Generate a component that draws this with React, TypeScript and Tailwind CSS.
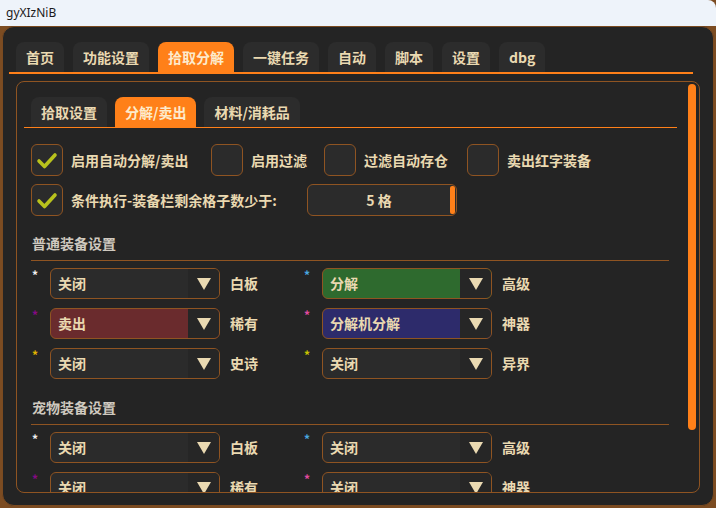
import React from "react";

const font = { fontFamily: '"Noto Sans CJK SC", "Noto Sans", sans-serif' };

const Tab = ({ label, active }: { label: string; active?: boolean }) => (
  <div
    className={`flex h-[30px] items-center rounded-t-[8px] px-[10px] text-[14px] font-bold ${
      active ? "bg-[#ff8019] text-[#fdebcc]" : "bg-[#2c2c2c] text-[#ead9b1]"
    }`}
  >
    {label}
  </div>
);

const CheckBox = ({ checked }: { checked?: boolean }) => (
  <div className="flex h-[32px] w-[32px] shrink-0 items-center justify-center rounded-[6px] border border-[#8f5422] bg-[#2b2b2b]">
    {checked && (
      <svg width="24" height="24" viewBox="0 0 24 24">
        <path d="M4 13 L9.5 18.5 L20 7" fill="none" stroke="#b9c21d" strokeWidth="3.6" strokeLinecap="round" strokeLinejoin="round" />
      </svg>
    )}
  </div>
);

const CheckItem = ({ label, checked, w }: { label: string; checked?: boolean; w: string }) => (
  <div className={`flex items-center gap-[8px] ${w}`}>
    <CheckBox checked={checked} />
    <span className="text-[14px] font-bold text-[#ead9b1]">{label}</span>
  </div>
);

const Combo = ({ value, bg }: { value: string; bg: string }) => (
  <div className={`flex h-[31px] w-[170px] shrink-0 overflow-hidden rounded-[6px] border border-[#8f5422] ${bg}`}>
    <div className="flex flex-1 items-center pl-[7px] text-[14px] font-bold text-[#ead9b1]">{value}</div>
    <div className="flex w-[31px] items-center justify-center bg-[#262626]">
      <svg width="14" height="12" viewBox="0 0 14 12">
        <path d="M0 0 H14 L7 12 Z" fill="#ead9b1" />
      </svg>
    </div>
  </div>
);

type Cell = { star: string; value: string; bg: string; label: string };

const ComboCell = ({ c }: { c: Cell }) => (
  <div className="flex w-[272px] items-center">
    <div className="flex h-[31px] w-[19px] items-start pl-[1px] pt-[1px]">
      <span className={`text-[12px] font-bold leading-[12px] ${c.star}`}>*</span>
    </div>
    <Combo value={c.value} bg={c.bg} />
    <span className="ml-[10px] text-[14px] font-bold text-[#ead9b1]">{c.label}</span>
  </div>
);

const plain = "bg-[#2b2b2b]";

const normalRows: [Cell, Cell][] = [
  [
    { star: "text-[#f0f0f0]", value: "关闭", bg: plain, label: "白板" },
    { star: "text-[#4aa8e0]", value: "分解", bg: "bg-[#2e6a2e]", label: "高级" },
  ],
  [
    { star: "text-[#850a85]", value: "卖出", bg: "bg-[#6a2b2d]", label: "稀有" },
    { star: "text-[#e04aa0]", value: "分解机分解", bg: "bg-[#2d2b6b]", label: "神器" },
  ],
  [
    { star: "text-[#e0b400]", value: "关闭", bg: plain, label: "史诗" },
    { star: "text-[#c8c400]", value: "关闭", bg: plain, label: "异界" },
  ],
];

const petRows: [Cell, Cell][] = [
  [
    { star: "text-[#f0f0f0]", value: "关闭", bg: plain, label: "白板" },
    { star: "text-[#4aa8e0]", value: "关闭", bg: plain, label: "高级" },
  ],
  [
    { star: "text-[#850a85]", value: "关闭", bg: plain, label: "稀有" },
    { star: "text-[#e04aa0]", value: "关闭", bg: plain, label: "神器" },
  ],
];

const ComboRows = ({ rows }: { rows: [Cell, Cell][] }) => (
  <div className="flex flex-col gap-[9px]">
    {rows.map((r, i) => (
      <div key={i} className="flex">
        <ComboCell c={r[0]} />
        <ComboCell c={r[1]} />
      </div>
    ))}
  </div>
);

export default function App() {
  return (
    <div className="flex h-[508px] w-[716px] flex-col overflow-hidden bg-[#7c4c22]" style={font}>
      {/* window title */}
      <div
        className="flex h-[26px] shrink-0 items-center rounded-tr-[8px] bg-[#eef3fa] pl-[6px] text-[12px] text-[#1a1a1a]"
        style={{ fontFamily: '"Noto Sans", sans-serif' }}
      >
        gyXIzNiB
      </div>

      <div className="ml-[2px] h-[480px] w-[712px] rounded-[12px] border border-[#7a4a20] bg-[#242424] pl-[6px] pt-[15px]">
        {/* top tabs */}
        <div className="w-[684px]">
          <div className="flex gap-[9px] pl-[7px]">
            {["首页", "功能设置", "拾取分解", "一键任务", "自动", "脚本", "设置", "dbg"].map((t) => (
              <Tab key={t} label={t} active={t === "拾取分解"} />
            ))}
          </div>
          <div className="h-[2px] bg-[#ff8019]" />
        </div>

        {/* inner panel */}
        <div className="ml-[7px] mt-[7px] flex h-[412px] w-[684px] overflow-hidden rounded-[8px] border border-[#8f5422]">
          <div className="flex-1 overflow-hidden pl-[7px] pr-[11px] pt-[15px]">
            <div className="flex gap-[8px] pl-[7px]">
              {["拾取设置", "分解/卖出", "材料/消耗品"].map((t) => (
                <Tab key={t} label={t} active={t === "分解/卖出"} />
              ))}
            </div>
            <div className="h-[1px] bg-[#ff8019]" />

            <div className="pl-[7px] pr-[8px]">
              <div className="mt-[16px] flex">
                <CheckItem label="启用自动分解/卖出" checked w="w-[180px]" />
                <CheckItem label="启用过滤" w="w-[113px]" />
                <CheckItem label="过滤自动存仓" w="w-[143px]" />
                <CheckItem label="卖出红字装备" w="w-[160px]" />
              </div>
              <div className="mt-[8px] flex items-center">
                <CheckItem label="条件执行-装备栏剩余格子数少于:" checked w="w-[276px]" />
                <div className="flex h-[32px] w-[150px] items-center rounded-[6px] border border-[#8f5422] bg-[#2b2b2b] pr-[1px]">
                  <span className="flex-1 text-center text-[14px] font-bold text-[#ead9b1]">5 格</span>
                  <div className="h-[28px] w-[5px] rounded-[2px] bg-[#ff8019]" />
                </div>
              </div>

              <div className="mt-[17px] pl-[1px] text-[14px] font-bold leading-[20px] text-[#cfc9bf]">普通装备设置</div>
              <div className="mt-[7px] h-[1px] bg-[#8f5422]" />
              <div className="mt-[7px]">
                <ComboRows rows={normalRows} />
              </div>

              <div className="mt-[18px] pl-[1px] text-[14px] font-bold leading-[20px] text-[#cfc9bf]">宠物装备设置</div>
              <div className="mt-[7px] h-[1px] bg-[#8f5422]" />
              <div className="mt-[7px]">
                <ComboRows rows={petRows} />
              </div>
            </div>
          </div>
          <div className="mr-[3px] mt-[2px] h-[346px] w-[8px] rounded-full bg-[#ff8019]" />
        </div>
      </div>
    </div>
  );
}
